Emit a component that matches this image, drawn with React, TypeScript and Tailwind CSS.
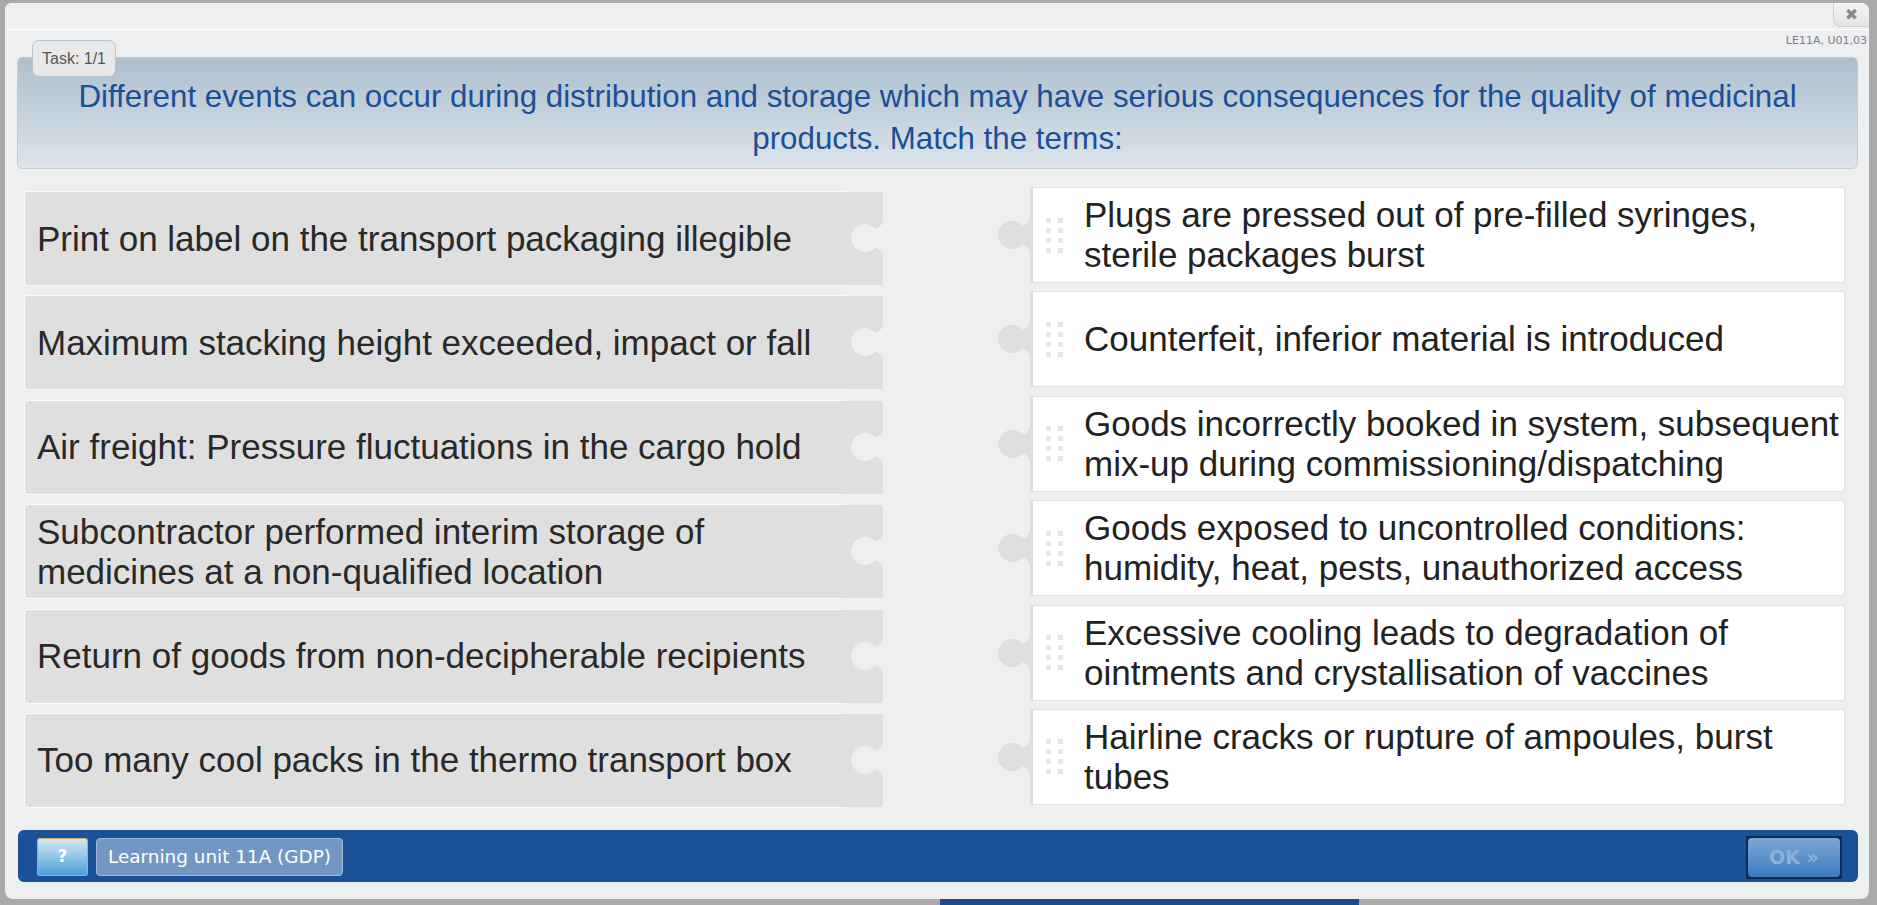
import React from "react";

const leftItems = [
  "Print on label on the transport packaging illegible",
  "Maximum stacking height exceeded, impact or fall",
  "Air freight: Pressure fluctuations in the cargo hold",
  "Subcontractor performed interim storage of medicines at a non-qualified location",
  "Return of goods from non-decipherable recipients",
  "Too many cool packs in the thermo transport box",
];

const rightItems = [
  "Plugs are pressed out of pre-filled syringes, sterile packages burst",
  "Counterfeit, inferior material is introduced",
  "Goods incorrectly booked in system, subsequent mix-up during commissioning/dispatching",
  "Goods exposed to uncontrolled conditions: humidity, heat, pests, unauthorized access",
  "Excessive cooling leads to degradation of ointments and crystallisation of vaccines",
  "Hairline cracks or rupture of ampoules, burst tubes",
];

function LeftPiece({ text }: { text: string }) {
  return (
    <div className="flex h-[95px] w-[859px]">
      <div className="flex w-[822px] items-center rounded-l-[4px] border border-r-0 border-[#fbfbfb] bg-[#dfdfdf] pl-[12px] pr-0 text-[35px] leading-[40px] text-[#292929]">
        <span>{text}</span>
      </div>
      <div className="my-px w-[37px] bg-[#dfdfdf]">
        <svg width="37" height="93" viewBox="0 0 37 93" className="block">
          <path
            d="M38,28 C35,34 32,37 29,36 A14,14 0 1,0 29,56 C32,55 35,58 38,64 Z"
            fill="#eeeff1"
          />
        </svg>
      </div>
    </div>
  );
}

function RightPiece({ text }: { text: string }) {
  return (
    <div className="flex h-[96px] w-[847px]">
      <div className="w-[32px]">
        <svg width="32" height="96" viewBox="0 0 32 96" className="block">
          <path
            d="M33,30 C30,36 27,39 24,38 A14,14 0 1,0 24,58 C27,57 30,60 33,66 Z"
            fill="#dedede"
          />
        </svg>
      </div>
      <div className="flex w-[815px] items-center rounded-r-[3px] border border-l-[3px] border-[#e2e2e2] border-l-[#dedede] bg-white pr-[2px]">
        <div className="ml-[13px] grid shrink-0 grid-cols-2 gap-x-[7px] gap-y-[5px]">
          {Array.from({ length: 8 }).map((_, i) => (
            <div key={i} className="h-[5px] w-[5px] bg-[#e6e6e6]" />
          ))}
        </div>
        <div className="ml-[21px] text-[35px] leading-[40px] text-[#222]">{text}</div>
      </div>
    </div>
  );
}

export default function App() {
  return (
    <div className="flex h-[905px] w-[1877px] flex-col overflow-hidden bg-[#a9aaac] pl-[5px] pt-[3px] font-['Liberation_Sans',Arial,sans-serif]">
      <div className="flex h-[896px] w-[1864px] flex-col rounded-tl-[6px] rounded-tr-[8px] rounded-b-[8px] bg-[#eeeff1]">
        {/* title bar */}
        <div className="flex h-[27px] justify-end border-b border-white">
          <div className="flex h-[24px] w-[36px] items-center justify-center rounded-bl-[8px] rounded-tr-[8px] border-b border-l border-[#cfd1d3] bg-linear-to-b from-[#f6f6f6] to-[#e4e4e4] font-['DejaVu_Sans',sans-serif] text-[16px] text-[#8a8a8a]">
            ✖
          </div>
        </div>
        {/* code row */}
        <div className="flex h-[27px] justify-end pr-[2px] pt-[5px] font-['DejaVu_Sans',Verdana,sans-serif] text-[11px] leading-none text-[#86798d]">
          LE11A, U01,03
        </div>
        {/* question panel */}
        <div className="relative ml-[12px] mr-[11px] flex h-[112px] items-center justify-center rounded-[5px] border border-[#c3cbd3] bg-linear-to-b from-[#adbfcd] to-[#dde4ea] px-[20px] pt-[9px] text-center text-[31.3px] leading-[42px] text-[#1b4f97]">
          <div className="absolute left-[14px] top-[-18px] flex h-[37px] w-[84px] items-center justify-center rounded-[7px] border border-[#b5c3cd] bg-[#e9e9e9] text-[16px] text-[#555]">
            Task: 1/1
          </div>
          <p>
            Different events can occur during distribution and storage which may have serious consequences for the
            quality of medicinal products. Match the terms:
          </p>
        </div>
        {/* items */}
        <div className="mt-[18px] flex">
          <div className="ml-[19px] mt-[4px] flex flex-col gap-[9.4px]">
            {leftItems.map((t) => (
              <LeftPiece key={t} text={t} />
            ))}
          </div>
          <div className="ml-[115px] flex flex-col gap-[8.4px]">
            {rightItems.map((t) => (
              <RightPiece key={t} text={t} />
            ))}
          </div>
        </div>
        {/* footer */}
        <div className="mb-[17px] ml-[13px] mr-[11px] mt-auto flex h-[52px] items-start rounded-[6px] bg-[#1a5198] pl-[19px] pr-[16px] font-['DejaVu_Sans',Verdana,sans-serif]">
          <div className="mt-[8px] flex h-[38px] w-[51px] items-center justify-center rounded-[3px] border border-[#8fb4d0] border-t-[#d9aa6a] bg-linear-to-b from-[#d2e8f6] to-[#49a0d6] text-[17px] font-bold text-white">
            ?
          </div>
          <div className="ml-[8px] mt-[8px] flex h-[38px] w-[247px] items-center justify-center rounded-[4px] border border-[#a3bbd9] bg-[#7397c3] text-[18.4px] text-white">
            Learning unit 11A (GDP)
          </div>
          <div className="ml-auto mt-[6px] h-[43px] w-[96px] bg-[#0f2a55] p-[2px]">
            <div className="flex h-full w-full items-center justify-center rounded-[4px] bg-linear-to-b from-[#7fa6d3] to-[#3b7cc0] text-[19px] font-bold text-[#8eb1da]">
              OK »
            </div>
          </div>
        </div>
      </div>
      <div className="flex h-[6px]">
        <div className="ml-[935px] h-full w-[419px] bg-[#1c4b85]" />
      </div>
    </div>
  );
}
